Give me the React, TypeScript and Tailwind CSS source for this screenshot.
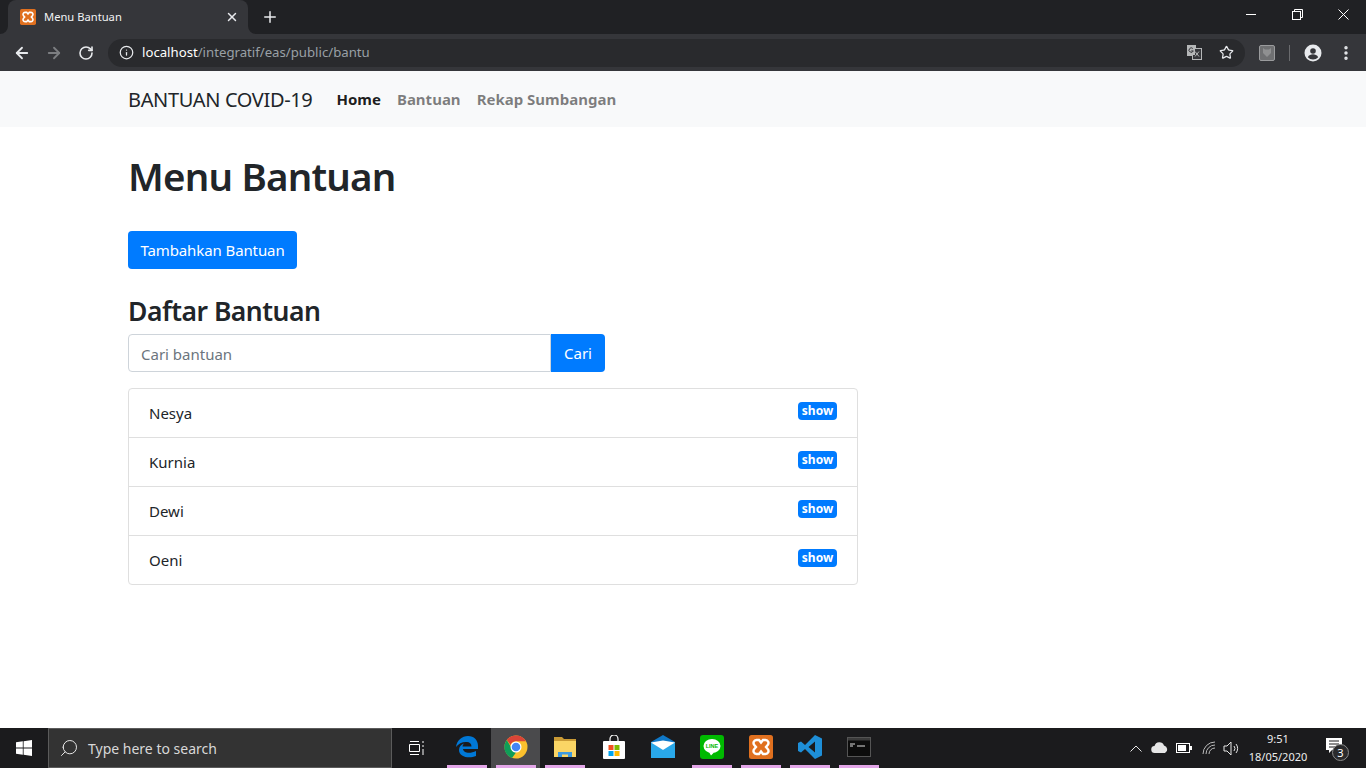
import { ArrowLeft, ArrowRight, RotateCw, Info, Star, X, Plus, EllipsisVertical, Search } from 'lucide-react';

const rows = ['Nesya', 'Kurnia', 'Dewi', 'Oeni'];

function XamppIcon({ size = 16 }: { size?: number }) {
  return (
    <svg width={size} height={size} viewBox="0 0 24 24">
      <rect width="24" height="24" rx="2.5" fill="#e0701f" />
      <path d="M7.500 5h2.500l2 2.500L14 5h2.500a3 3 0 0 1 2.200 5L17 12l1.700 2a3 3 0 0 1-2.200 5H14l-2-2.500L10 19H7.500a3 3 0 0 1-2.200-5L7 12l-1.700-2a3 3 0 0 1 2.200-5z" fill="none" stroke="#fff" strokeWidth="2.400" />
    </svg>
  );
}

function BrowserChrome() {
  return (
    <div className="shrink-0 bg-[#35363a]">
      {/* tab strip */}
      <div className="h-[34px] bg-[#202124] flex items-start pl-2">
        <div className="relative w-[240px] h-[34px] bg-[#35363a] rounded-t-lg flex items-center pl-3 pr-2">
          <svg className="absolute -left-[8px] bottom-0" width="8" height="8" viewBox="0 0 8 8"><path d="M8 0v8H0a8 8 0 0 0 8-8z" fill="#35363a" /></svg>
          <svg className="absolute -right-[8px] bottom-0" width="8" height="8" viewBox="0 0 8 8"><path d="M0 0v8h8a8 8 0 0 1-8-8z" fill="#35363a" /></svg>
          <XamppIcon />
          <span className="ml-2 text-[11.2px] text-[#f1f3f4] flex-1">Menu Bantuan</span>
          <X className="w-[14px] h-[14px] text-[#e8eaed] -ml-px mr-px" strokeWidth={2.5} />
        </div>
        <Plus className="w-[18px] h-[18px] text-[#e8eaed] ml-[13px] mt-[8px]" strokeWidth={2} />
        <div className="flex-1" />
        <div className="flex h-[28px] items-center">
          <div className="w-[46px] flex justify-center">
            <svg width="10" height="10" viewBox="0 0 10 10"><path d="M0 5.500h10" stroke="#fff" /></svg>
          </div>
          <div className="w-[46px] flex justify-center">
            <svg width="11" height="11" viewBox="0 0 11 11" fill="none" stroke="#fff"><rect x="0.5" y="2.5" width="8" height="8" /><path d="M2.500 2.500V.5h8v8H8.500" /></svg>
          </div>
          <div className="w-[46px] flex justify-center">
            <svg width="11" height="11" viewBox="0 0 11 11" fill="none" stroke="#fff"><path d="M.5.5l10 10M10.500.5l-10 10" /></svg>
          </div>
        </div>
      </div>
      {/* toolbar */}
      <div className="h-[37px] flex items-center pl-[13px]">
        <ArrowLeft className="w-[18px] h-[18px] text-[#e8eaed]" strokeWidth={2.4} />
        <ArrowRight className="w-[18px] h-[18px] text-[#7c7e81] ml-[14px]" strokeWidth={2.4} />
        <RotateCw className="w-[16px] h-[16px] text-[#e8eaed] ml-[15px]" strokeWidth={2.4} />
        <div className="ml-[14px] w-[1137px] h-[28px] rounded-full bg-[#292a2d] flex items-center pl-[11px] pr-[11px]">
          <Info className="w-[15px] h-[15px] text-[#e8eaed]" strokeWidth={2} />
          <span className="ml-[8px] text-[13.2px] text-white">localhost<span className="text-[#9aa0a6]">/integratif/eas/public/bantu</span></span>
          <div className="flex-1" />
          <svg width="15" height="15" viewBox="0 0 15 15">
            <rect x="0" y="0" width="9" height="11" fill="#b5b7b8" />
            <rect x="5.500" y="3.500" width="9" height="11" fill="#35363a" stroke="#b5b7b8" />
            <rect x="1" y="1" width="7" height="9" fill="#b5b7b8" />
            <path d="M5.800 3.500a2.200 2.200 0 1 0 .5 2.400H4.300" fill="none" stroke="#35363a" />
            <path d="M8 6.500l4 5M12 6.500l-4 5" fill="none" stroke="#b5b7b8" />
          </svg>
          <Star className="w-[15px] h-[15px] text-[#e8eaed] ml-[17px]" strokeWidth={2} />
        </div>
        <div className="ml-[14px] w-[16px] h-[16px] rounded-[2px] bg-[#6f7072] border border-[#9a9b9d] flex items-center justify-center">
          <svg width="8" height="9" viewBox="0 0 8 9"><path d="M0 0l2 1.500h4L8 0v5L4 9 0 5z" fill="#8f9091" /></svg>
        </div>
        <div className="ml-[14px] w-px h-[16px] bg-[#6a6b6e]" />
        <svg className="ml-[14px]" width="18" height="18" viewBox="0 0 18 18">
          <circle cx="9" cy="9" r="8.5" fill="#e8eaed" />
          <circle cx="9" cy="7" r="2.8" fill="#35363a" />
          <path d="M3.800 13.200c1-2 3.200-2.900 5.200-2.900s4.200.9 5.200 2.900A7 7 0 0 1 9 15.500a7 7 0 0 1-5.200-2.300z" fill="#35363a" />
        </svg>
        <EllipsisVertical className="w-[18px] h-[18px] text-[#e8eaed] ml-[15px]" strokeWidth={2.6} />
      </div>
    </div>
  );
}

function Navbar() {
  return (
    <nav className="h-[56px] shrink-0 bg-[#f8f9fa] flex items-center pl-[128px] text-[15px] pt-px">
      <span className="text-[20px] tracking-[-0.35px] text-[#212529] mr-[16px]">BANTUAN COVID-19</span>
      <span className="px-2 font-bold text-[rgba(0,0,0,0.9)]">Home</span>
      <span className="px-2 font-bold text-[rgba(0,0,0,0.5)]">Bantuan</span>
      <span className="px-2 font-bold text-[rgba(0,0,0,0.5)]">Rekap Sumbangan</span>
    </nav>
  );
}

function Content() {
  return (
    <main className="flex-1 min-h-0 px-[128px] pt-[25px] text-[#212529] text-[15px]">
      <h1 className="text-[38.5px] leading-[48px] font-semibold tracking-[-0.8px]">Menu Bantuan</h1>
      <button className="mt-[31px] h-[38px] w-[169px] rounded bg-[#007bff] text-white tracking-[-0.1px] block">Tambahkan Bantuan</button>
      <h3 className="mt-[26px] text-[26.5px] leading-[32px] font-semibold tracking-[-0.5px]">Daftar Bantuan</h3>
      <div className="mt-[7px] flex w-[477px] h-[38px]">
        <div className="flex-1 border border-[#ced4da] rounded-l flex items-center px-3 pt-[2px] text-[#6c757d]">Cari bantuan</div>
        <button className="w-[54px] bg-[#007bff] text-white rounded-r">Cari</button>
      </div>
      <ul className="mt-4 w-[730px] border border-[#dfdfdf] rounded divide-y divide-[#dfdfdf]">
        {rows.map((name) => (
          <li key={name} className="h-[49px] last:h-[48px] flex items-start justify-between pl-5 pr-5 pt-[13px]">
            <span>{name}</span>
            <span className="h-[18px] w-[39px] rounded bg-[#007bff] text-white text-[12px] font-bold flex items-center justify-center">show</span>
          </li>
        ))}
      </ul>
    </main>
  );
}

const taskIcons = [
  { key: 'edge', open: true, icon: (
    <svg width="24" height="24" viewBox="0 0 24 24"><path d="M1 12C2 5 7 1 13 1c6 0 10 4 10 10v3H8c.3 4 7 5 13 2v5c-7 3-17 1-17-6 0-3 2-5.500 5-6.500-1 1-1.500 2-1.500 3h9c0-3-2-4.500-4.500-4.500C8 6.500 3.500 8.500 1 12z" fill="#0078d7" /></svg>
  ) },
  { key: 'chrome', open: true, active: true, icon: (
    <svg width="24" height="24" viewBox="0 0 24 24">
      <circle cx="12" cy="12" r="11.500" fill="#fbc02d" />
      <path d="M12 .5a11.500 11.500 0 0 1 10 5.800H12A5.700 5.700 0 0 0 6.600 10L2.800 5A11.500 11.500 0 0 1 12 .5z" fill="#db4437" />
      <path d="M2.800 5l4.700 8a5.500 5.500 0 0 0 4.500 4.500L8 23A11.500 11.500 0 0 1 2.800 5z" fill="#0f9d58" />
      <circle cx="12" cy="12" r="5.500" fill="#fff" />
      <circle cx="12" cy="12" r="4.300" fill="#4285f4" />
    </svg>
  ) },
  { key: 'files', open: true, icon: (
    <svg width="24" height="22" viewBox="0 0 24 22">
      <path d="M1 1h8l2 2h12v18H1z" fill="#c99a35" />
      <path d="M1 5h22v16H1z" fill="#fad565" />
      <path d="M5 16h14v5h-4v-2.500H9V21H5z" fill="#3d9ae0" />
    </svg>
  ) },
  { key: 'store', icon: (
    <svg width="24" height="24" viewBox="0 0 24 24">
      <path d="M8 6V4a4 4 0 0 1 8 0v2" fill="none" stroke="#fff" strokeWidth="1.200" />
      <rect x="1" y="6" width="22" height="18" rx="1" fill="#fff" />
      <rect x="6.500" y="10" width="5" height="5" fill="#f25022" />
      <rect x="12.500" y="10" width="5" height="5" fill="#7fba00" />
      <rect x="6.500" y="16" width="5" height="5" fill="#00a4ef" />
      <rect x="12.500" y="16" width="5" height="5" fill="#ffb900" />
    </svg>
  ) },
  { key: 'mail', icon: (
    <svg width="24" height="24" viewBox="0 0 24 24">
      <path d="M0 7 12 0l12 7v16H0z" fill="#0f78c8" />
      <path d="M0 7l12 8 12-8v16H0z" fill="#29a8ea" />
      <path d="M0 7.500 12 15l12-7.500-12-2z" fill="#fff" />
    </svg>
  ) },
  { key: 'line', open: true, icon: (
    <svg width="24" height="24" viewBox="0 0 24 24">
      <rect width="24" height="24" rx="3" fill="#00b900" />
      <ellipse cx="12" cy="11" rx="8.500" ry="7" fill="#fff" />
      <path d="M9 17l2 3.500 3-3z" fill="#fff" />
      <text x="12" y="13" textAnchor="middle" fontSize="5.500" fontWeight="700" fill="#00b900" fontFamily="Liberation Sans, sans-serif">LINE</text>
    </svg>
  ) },
  { key: 'xampp', open: true, icon: <XamppIcon size={24} /> },
  { key: 'vscode', open: true, icon: (
    <svg width="24" height="24" viewBox="0 0 24 24">
      <path d="M17 0l7 3.500v17L17 24 7 14l-4 3.500L0 16V8l3-1.500L7 10zM17 6.500 10.500 12l6.500 5.500z" fill="#1e8fd8" />
    </svg>
  ) },
  { key: 'cmd', open: true, icon: (
    <svg width="24" height="20" viewBox="0 0 24 20">
      <rect x="0.500" y="0.500" width="23" height="19" fill="#0c0c0c" stroke="#555" />
      <rect x="1" y="1" width="22" height="2.500" fill="#3b3b3b" />
      <path d="M3 7h5M3 9h3M10 9h8" stroke="#ddd" strokeWidth="1" />
    </svg>
  ) },
];

function Taskbar() {
  return (
    <div className="h-[40px] shrink-0 bg-[#1b1b1d] flex items-center text-white">
      <div className="w-[48px] flex justify-center">
        <svg width="16" height="16" viewBox="0 0 16 16" fill="#fff">
          <path d="M0 2.300 6.800 1.300v6.300H0zM7.600 1.200 16 0v7.600H7.600zM0 8.400h6.800v6.300L0 13.700zM7.600 8.400H16V16l-8.400-1.200z" />
        </svg>
      </div>
      <div className="w-[344px] h-[40px] bg-[#333333] border border-[#5b5b5b] flex items-center pl-[10px]">
        <Search className="w-[20px] h-[20px] text-[#e6e6e6] -scale-x-100" strokeWidth={1.2} />
        <span className="ml-[9px] text-[14px] text-[#d8d8d8]">Type here to search</span>
      </div>
      <div className="w-[50px] flex justify-center">
        <svg width="16" height="16" viewBox="0 0 16 16" fill="none" stroke="#fff"><path d="M1 1.500h9M1 14.500h9M.5 4.500h10v7H.5zM14 1v2M14 5v2M14 9v6" /></svg>
      </div>
      <div className="flex">
        {taskIcons.map((t) => (
          <div key={t.key} className={`relative w-[49px] h-[40px] flex items-center justify-center pb-[2px] ${t.active ? 'bg-[#4a4a4c]' : ''}`}>
            {t.icon}
            {t.open && <div className="absolute bottom-0 left-1/2 -translate-x-1/2 h-[3px] w-[40px] bg-[#e3a6e8]" />}
          </div>
        ))}
      </div>
      <div className="flex-1" />
      <div className="flex items-center">
        <svg width="12" height="7" viewBox="0 0 12 7" fill="none" stroke="#e6e6e6"><path d="M.5 6.500 6 1l5.500 5.500" /></svg>
        <svg className="ml-[9px]" width="18" height="12" viewBox="0 0 18 12"><path d="M4 11a3.500 3.500 0 0 1-.5-7A5 5 0 0 1 13 3.500 4 4 0 0 1 14 11z" fill="#e6e6e6" /></svg>
        <svg className="ml-[7px]" width="16" height="10" viewBox="0 0 16 10" fill="none"><rect x=".5" y=".5" width="13" height="9" stroke="#fff" /><rect x="2" y="2" width="8" height="6" fill="#fff" /><rect x="14" y="3" width="2" height="4" fill="#fff" /></svg>
        <svg className="ml-[10px]" width="14" height="14" viewBox="0 0 14 14" fill="none" stroke="#bbb"><path d="M1 13A12 12 0 0 1 13 1M4 13a9 9 0 0 1 9-9M7 13a6 6 0 0 1 6-6" /></svg>
        <svg className="ml-[7px]" width="17" height="15" viewBox="0 0 17 15" fill="none" stroke="#e6e6e6"><path d="M1 5h3l4-4v13l-4-4H1zM11 5a4 4 0 0 1 0 5M13 3a7 7 0 0 1 0 9" /></svg>
      </div>
      <div className="ml-[7px] w-[62px] flex flex-col items-center text-[11px] leading-[18px] text-[#eeeeee]">
        <span>9:51</span>
        <span className="whitespace-nowrap">18/05/2020</span>
      </div>
      <div className="relative ml-[15px] mr-[16px] w-[26px] h-[30px]">
        <svg className="absolute left-[2px] top-[5px]" width="16" height="16" viewBox="0 0 16 16" fill="#fff"><path d="M0 0h16v12H6l-3 3v-3H0z" /><path d="M3 3h10M3 6h10M3 9h7" stroke="#1b1b1d" /></svg>
        <span className="absolute left-[8px] top-[11px] w-[17px] h-[17px] rounded-full bg-[#2a2a2c] border border-[#8a8a8a] text-[11px] leading-[15px] text-center text-white">3</span>
      </div>
    </div>
  );
}

export default function App() {
  return (
    <div className="h-screen flex flex-col bg-white overflow-hidden font-['Noto_Sans',sans-serif]">
      <BrowserChrome />
      <Navbar />
      <Content />
      <Taskbar />
    </div>
  );
}
